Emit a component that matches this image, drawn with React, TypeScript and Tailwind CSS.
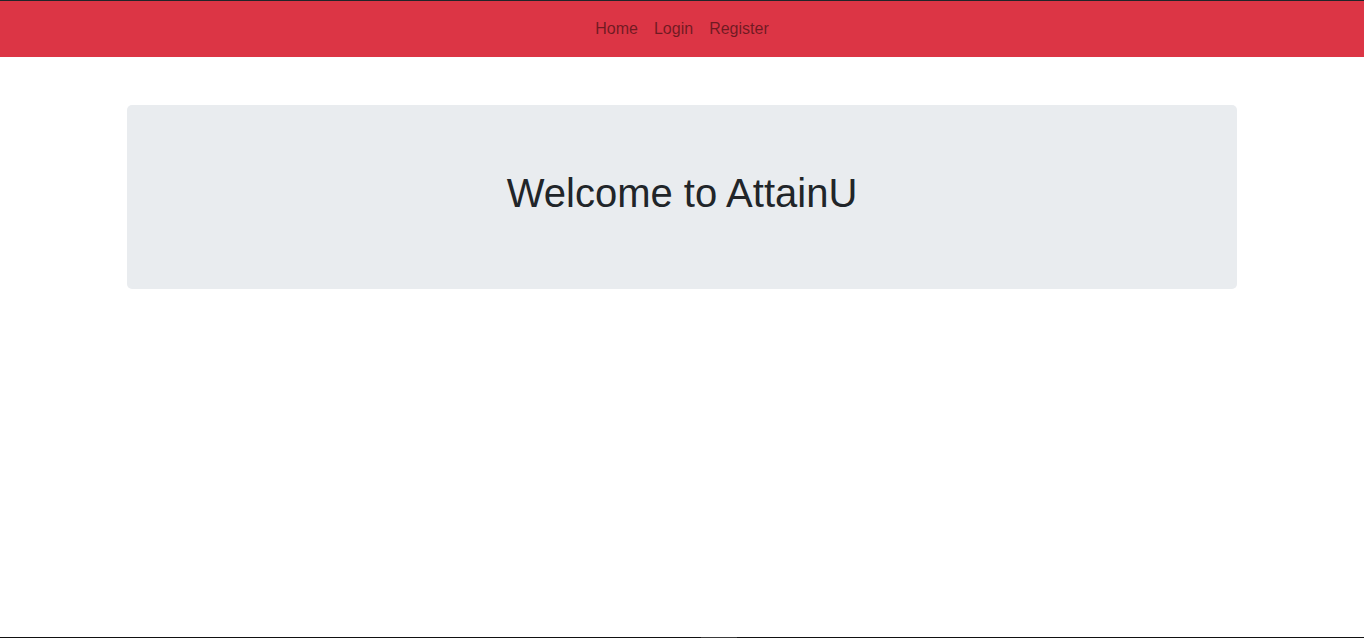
export default function App() {
  const links = ['Home', 'Login', 'Register'];

  return (
    <div className="flex min-h-screen flex-col bg-white font-['Liberation_Sans',Arial,sans-serif] text-[#212529]">
      <nav className="flex h-[57px] items-center justify-center border-t border-[#212529] bg-[#dc3545]">
        <ul className="flex">
          {links.map((l) => (
            <li key={l}>
              <a href="#" className="block px-2 py-2 text-base leading-6 text-black/50">
                {l}
              </a>
            </li>
          ))}
        </ul>
      </nav>

      <main className="mx-auto mt-12 w-[1140px] px-[15px]">
        <div className="rounded-[5px] bg-[#e9ecef] px-8 py-16 text-center">
          <h1 className="mb-2 text-[40px] leading-[48px] font-normal">Welcome to AttainU</h1>
        </div>
      </main>

      <div className="mt-auto flex h-px bg-[#111111]">
        <div className="ml-[701px] w-[36px] bg-[#3a3a3a]" />
      </div>
    </div>
  );
}
